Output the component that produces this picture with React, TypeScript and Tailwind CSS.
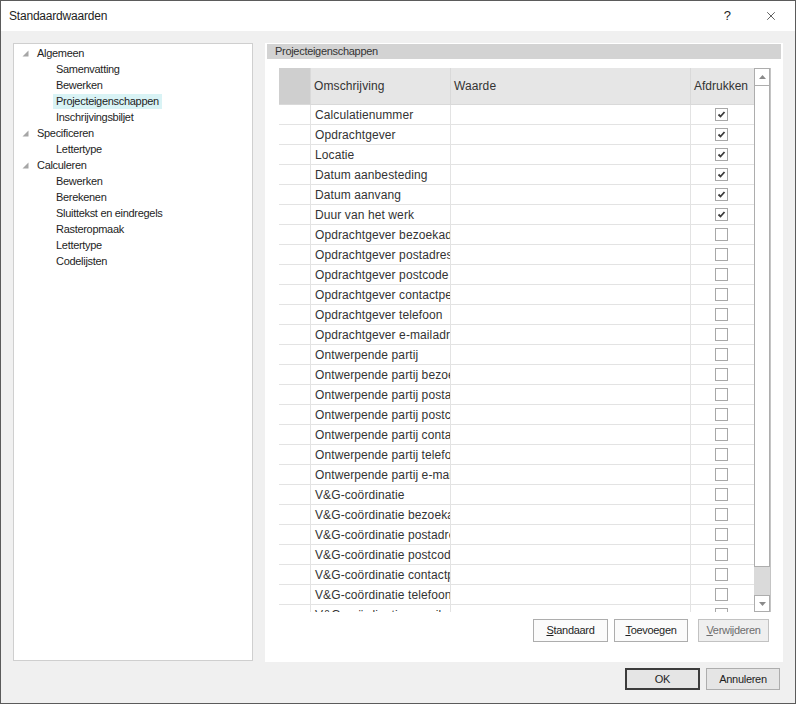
import { X } from "lucide-react";

const ui = { fontFamily: '"Liberation Sans", Arial, sans-serif' };

const rows: [string, boolean][] = [
  ["Calculatienummer", true],
  ["Opdrachtgever", true],
  ["Locatie", true],
  ["Datum aanbesteding", true],
  ["Datum aanvang", true],
  ["Duur van het werk", true],
  ["Opdrachtgever bezoekadres", false],
  ["Opdrachtgever postadres", false],
  ["Opdrachtgever postcode", false],
  ["Opdrachtgever contactpersoon", false],
  ["Opdrachtgever telefoon", false],
  ["Opdrachtgever e-mailadres", false],
  ["Ontwerpende partij", false],
  ["Ontwerpende partij bezoekadres", false],
  ["Ontwerpende partij postadres", false],
  ["Ontwerpende partij postcode", false],
  ["Ontwerpende partij contactpersoon", false],
  ["Ontwerpende partij telefoon", false],
  ["Ontwerpende partij e-mailadres", false],
  ["V&G-coördinatie", false],
  ["V&G-coördinatie bezoekadres", false],
  ["V&G-coördinatie postadres", false],
  ["V&G-coördinatie postcode", false],
  ["V&G-coördinatie contactpersoon", false],
  ["V&G-coördinatie telefoon", false],
  ["V&G-coördinatie e-mailadres", false],
];

const tree: { label: string; level: number; selected?: boolean }[] = [
  { label: "Algemeen", level: 0 },
  { label: "Samenvatting", level: 1 },
  { label: "Bewerken", level: 1 },
  { label: "Projecteigenschappen", level: 1, selected: true },
  { label: "Inschrijvingsbiljet", level: 1 },
  { label: "Specificeren", level: 0 },
  { label: "Lettertype", level: 1 },
  { label: "Calculeren", level: 0 },
  { label: "Bewerken", level: 1 },
  { label: "Berekenen", level: 1 },
  { label: "Sluittekst en eindregels", level: 1 },
  { label: "Rasteropmaak", level: 1 },
  { label: "Lettertype", level: 1 },
  { label: "Codelijsten", level: 1 },
];

function Expander() {
  return (
    <svg width="7" height="7" viewBox="0 0 7 7" className="shrink-0">
      <polygon points="6.5,0.5 6.5,6.5 0.5,6.5" fill="#a6a6a6" />
    </svg>
  );
}

function Checkbox({ checked }: { checked: boolean }) {
  return (
    <div className="w-[13px] h-[13px] border border-[#a8a8a8] bg-white flex items-center justify-center">
      {checked && (
        <svg width="11" height="11" viewBox="0 0 11 11">
          <path d="M2.5 5.5 L4.5 7.5 L8.5 3" fill="none" stroke="#3c3c3c" strokeWidth="1.8" />
        </svg>
      )}
    </div>
  );
}

function Btn({ label, mn, w, disabled }: { label: string; mn: number; w: string; disabled?: boolean }) {
  return (
    <button
      className={`${w} h-[23px] border text-[11px] tracking-[-0.3px] flex items-center justify-center ${
        disabled ? "border-[#c2c2c2] bg-[#efefef] text-[#6d6d6d]" : "border-[#adadad] bg-[#fbfbfb] text-[#1e1e1e]"
      }`}
    >
      <span>
        <span className="underline">{label.slice(0, mn)}</span>
        {label.slice(mn)}
      </span>
    </button>
  );
}

export default function App() {
  return (
    <div
      className="w-[796px] h-[704px] border border-[#5b5b5b] bg-[#f0f0f0] flex flex-col overflow-hidden text-[#1e1e1e]"
      style={ui}
    >
      {/* Title bar */}
      <div className="h-[30px] bg-white flex items-center pl-[8px] pr-[17px] shrink-0">
        <span className="text-[12px] tracking-[-0.2px]">Standaardwaarden</span>
        <span className="ml-auto text-[13px] mr-[33px]">?</span>
        <X className="w-[14px] h-[14px]" strokeWidth={1.2} />
      </div>

      <div className="flex mt-[12px] ml-[12px] gap-[12px]">
        {/* Tree */}
        <div className="w-[240px] h-[618px] bg-white border border-[#cfcfcf] pt-[1px] text-[11px] tracking-[-0.3px]">
          {tree.map((t, i) => (
            <div key={i} className="h-[16px] flex items-center">
              {t.level === 0 ? (
                <div className="flex items-center pl-[8px] gap-[8px]">
                  <Expander />
                  <span>{t.label}</span>
                </div>
              ) : (
                <span
                  className={`ml-[39px] px-[3px] h-[15px] leading-[15px] ${t.selected ? "bg-[#d9f3f5]" : ""}`}
                >
                  {t.label}
                </span>
              )}
            </div>
          ))}
        </div>

        {/* Right panel */}
        <div className="w-[518px] h-[619px] bg-white pt-[1px] px-[2px] flex flex-col">
          <div className="h-[15px] bg-[#d3d3d3] pl-[8px] text-[11px] tracking-[-0.3px] leading-[15px] text-[#333]">
            Projecteigenschappen
          </div>

          <div className="flex ml-[12px] mt-[9px] h-[544px]">
            <div className="w-[475px] overflow-hidden text-[12px] tracking-[0.1px] text-[#333]">
              <div className="flex h-[37px] bg-[#e6e6e6] border-b border-[#d9d9d9]">
                <div className="w-[31px] bg-[#cfcfcf]" />
                <div className="w-[140px] border-l border-[#d9d9d9] flex items-center pl-[3px]">Omschrijving</div>
                <div className="w-[240px] border-l border-[#d9d9d9] flex items-center pl-[3px]">Waarde</div>
                <div className="w-[64px] border-l border-[#d9d9d9] flex items-center pl-[3px] tracking-[0px]">
                  Afdrukken
                </div>
              </div>
              {rows.map(([name, checked], i) => (
                <div key={i} className="flex h-[20px] border-b border-[#e3e3e3]">
                  <div className="w-[31px]" />
                  <div className="w-[140px] border-l border-[#e3e3e3] pl-[4px] flex items-center whitespace-nowrap overflow-hidden">
                    {name}
                  </div>
                  <div className="w-[240px] border-l border-[#e3e3e3]" />
                  <div className="w-[64px] border-l border-[#e3e3e3] flex items-center justify-center pr-[2px]">
                    <Checkbox checked={checked} />
                  </div>
                </div>
              ))}
            </div>

            {/* Scrollbar */}
            <div className="w-[17px] flex flex-col bg-[#dadada] border-r border-[#c4c4c4]">
              <div className="h-[18px] bg-white border border-[#adadad] flex items-center justify-center">
                <svg width="7" height="4" viewBox="0 0 7 4">
                  <polygon points="3.5,0 7,4 0,4" fill="#8a8a8a" />
                </svg>
              </div>
              <div className="h-[481px] bg-white border border-[#adadad] border-t-0" />
              <div className="flex-1" />
              <div className="h-[17px] bg-white border border-[#adadad] flex items-center justify-center">
                <svg width="7" height="4" viewBox="0 0 7 4">
                  <polygon points="0,0 7,0 3.5,4" fill="#8a8a8a" />
                </svg>
              </div>
            </div>
          </div>

          <div className="flex justify-end mt-[7px] pr-[12px]">
            <Btn label="Standaard" mn={1} w="w-[75px]" />
            <div className="w-[6px]" />
            <Btn label="Toevoegen" mn={1} w="w-[74px]" />
            <div className="w-[10px]" />
            <Btn label="Verwijderen" mn={1} w="w-[71px]" disabled />
          </div>
        </div>
      </div>

      {/* Footer */}
      <div className="flex justify-end mt-[6px] pr-[15px] gap-[6px] text-[11px] tracking-[-0.3px]">
        <button className="w-[75px] h-[22px] border-2 border-[#3c3c3c] bg-[#e5e5e5]">OK</button>
        <button className="w-[74px] h-[22px] border border-[#adadad] bg-[#e5e5e5]">Annuleren</button>
      </div>
    </div>
  );
}
